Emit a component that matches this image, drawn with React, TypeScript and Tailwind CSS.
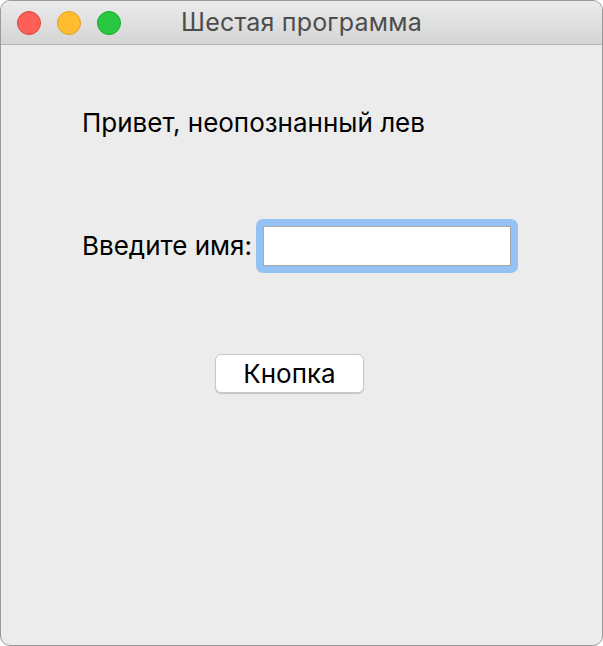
export default function App() {
  const font = { fontFamily: "Inter, 'Noto Sans', sans-serif" };

  return (
    <div
      className="w-[603px] h-[646px] bg-[#ececec] border border-[#9a9a9a] rounded-[10px] overflow-hidden flex flex-col"
      style={font}
    >
      {/* title bar */}
      <div className="relative h-[44px] shrink-0 flex items-center bg-gradient-to-b from-[#ebebeb] to-[#d5d5d5] border-b border-[#b4b4b4]">
        <div className="flex items-center gap-4 pl-4">
          <span className="w-6 h-6 rounded-full bg-[#fe5f57] border border-[#e0443e]" />
          <span className="w-6 h-6 rounded-full bg-[#febc2e] border border-[#dea123]" />
          <span className="w-6 h-6 rounded-full bg-[#28c840] border border-[#1aab29]" />
        </div>
        <div className="absolute inset-0 flex items-center justify-center text-[25px] text-[#4d4d4d] tracking-[0.2px]">
          Шестая программа
        </div>
      </div>

      {/* content */}
      <div className="flex flex-col pl-[81px] pt-[60px] text-[26px] text-black">
        <p className="leading-[36px]">Привет, неопознанный лев</p>

        <div className="flex items-center gap-[4px] mt-[78px]">
          <span className="leading-[36px]">Введите имя:</span>
          <div className="w-[262px] h-[54px] rounded-[7px] bg-[#94c2f5] p-[7px]">
            <input className="w-full h-full bg-white border border-[#a9a9a9] outline-none px-1" />
          </div>
        </div>

        <button className="mt-[81px] ml-[133px] w-[149px] h-[39px] bg-white rounded-[6px] border border-[#c8c8c8] shadow-[0_1px_1px_rgba(0,0,0,0.18)] text-[26px] leading-none text-black">
          Кнопка
        </button>
      </div>
    </div>
  );
}
